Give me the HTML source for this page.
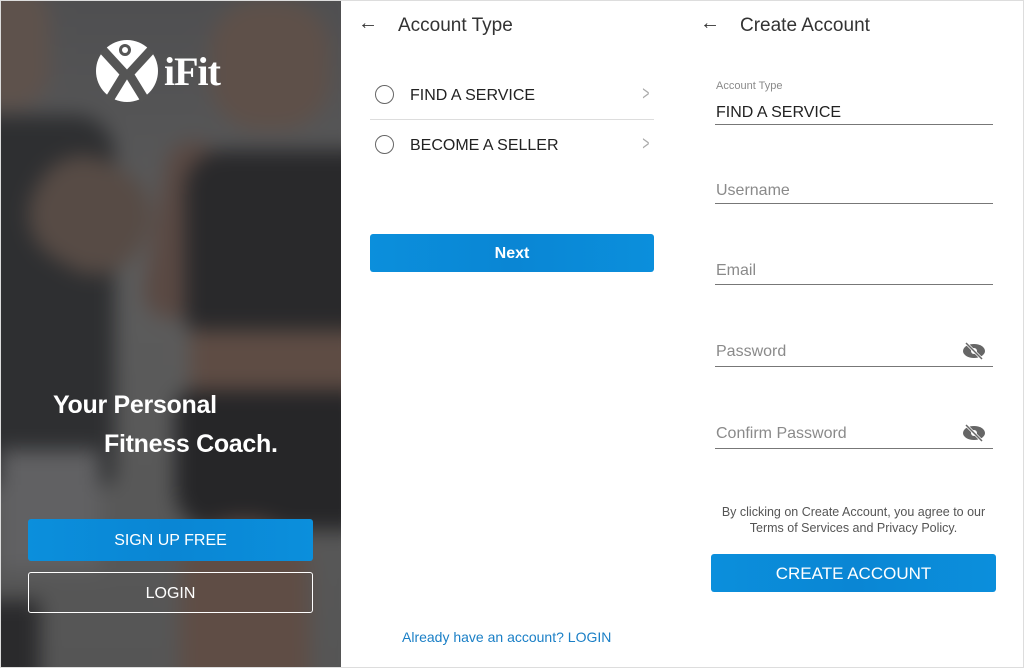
<!DOCTYPE html>
<html><head><meta charset="utf-8"><style>
*{margin:0;padding:0;box-sizing:border-box}
body{width:1024px;height:668px;background:#fff;font-family:"Liberation Sans",Arial,sans-serif;position:relative;overflow:hidden}
.a{position:absolute}
#left{left:0;top:0;width:341px;height:668px;background:#58585a;overflow:hidden}
#photo{left:-20px;top:-20px;width:381px;height:708px;filter:blur(10px)}
#photo div{position:absolute}
.btn{position:absolute;color:#fff;text-align:center;font-size:16px;border-radius:3px}
.blue{background:linear-gradient(90deg,#0b8fdc,#0a86d4 50%,#0b8fdc)}
.lbl{position:absolute;color:#8a8a8a;font-size:16px}
.line{position:absolute;height:1px;background:#777}
</style></head><body>
<div id="left" class="a">
 <div id="photo" class="a">
 <div style="left:0;top:0;width:381px;height:708px;background:linear-gradient(180deg,#4e4e50,#5c5c5c 40%,#555 100%)"></div>
 <div style="left:0;top:0;width:70px;height:130px;background:#5e524c;border-radius:0 40px 40px 0"></div>
 <div style="left:0;top:135px;width:135px;height:370px;background:#2e2f31;border-radius:0 40px 10px 0"></div>
 <div style="left:50px;top:180px;width:120px;height:110px;background:#574b45;border-radius:50px;transform:rotate(30deg)"></div>
 <div style="left:230px;top:20px;width:120px;height:130px;background:#5e5049;border-radius:50px"></div>
 <div style="left:175px;top:160px;width:55px;height:180px;background:#5a4943;border-radius:30px;transform:rotate(10deg)"></div>
 <div style="left:205px;top:170px;width:180px;height:180px;background:#29292b;border-radius:40px 0 0 10px"></div>
 <div style="left:210px;top:350px;width:171px;height:60px;background:#5e4c44"></div>
 <div style="left:195px;top:410px;width:186px;height:140px;background:#262628;border-radius:20px 0 0 40px"></div>
 <div style="left:200px;top:540px;width:130px;height:168px;background:#5f4d45;border-radius:60px 60px 0 0"></div>
 <div style="left:20px;top:470px;width:100px;height:120px;background:#616163"></div>
 <div style="left:0;top:620px;width:60px;height:88px;background:#2a2a2c"></div>
 </div>
 <svg class="a" style="left:95px;top:38px" width="64" height="66" viewBox="0 0 64 66">
  <circle cx="32" cy="33" r="31" fill="#fff"/>
  <path d="M8 12 L30 36 L14 62 M56 12 L34 36 L50 62" stroke="#555" stroke-width="9" fill="none"/>
  <circle cx="30" cy="12" r="6" fill="#555"/><circle cx="30" cy="12" r="3" fill="#fff"/>
 </svg>
 <div class="a" style="left:164px;top:48px;color:#fff;font:bold 40px 'Liberation Serif',serif;letter-spacing:-1px">iFit</div>
 <div class="a" style="left:53px;top:391px;color:#fff;font-weight:bold;font-size:25px;letter-spacing:-0.3px">Your Personal</div>
 <div class="a" style="left:104px;top:430px;color:#fff;font-weight:bold;font-size:25px;letter-spacing:-0.3px">Fitness Coach.</div>
 <div class="btn blue" style="left:28px;top:519px;width:285px;height:42px;line-height:43px">SIGN UP FREE</div>
 <div class="btn" style="left:28px;top:572px;width:285px;height:41px;line-height:41px;border:1.5px solid #fff">LOGIN</div>
</div>
<div class="a" style="left:0;top:0;width:1024px;height:668px;border:1px solid #ddd;pointer-events:none"></div>

<div class="a" style="left:358px;top:12px;font-size:20px;color:#333">&#8592;</div>
<div class="a" style="left:398px;top:15px;font-size:19px;color:#333">Account Type</div>
<div class="a" style="left:375px;top:85px;width:19px;height:19px;border:1.5px solid #666;border-radius:50%"></div>
<div class="a" style="left:410px;top:87px;font-size:16px;color:#222">FIND A SERVICE</div>
<div class="a" style="left:640px;top:83px;font-size:20px;color:#aaa;transform:scaleX(.6)">&gt;</div>
<div class="a" style="left:370px;top:119px;width:284px;height:1px;background:#ddd"></div>
<div class="a" style="left:375px;top:135px;width:19px;height:19px;border:1.5px solid #666;border-radius:50%"></div>
<div class="a" style="left:410px;top:137px;font-size:16px;color:#222">BECOME A SELLER</div>
<div class="a" style="left:640px;top:133px;font-size:20px;color:#aaa;transform:scaleX(.6)">&gt;</div>
<div class="btn blue" style="left:370px;top:234px;width:284px;height:38px;line-height:39px;font-weight:bold">Next</div>
<div class="a" style="left:402px;top:629px;font-size:14px;color:#1a7fc6">Already have an account? LOGIN</div>

<div class="a" style="left:700px;top:12px;font-size:20px;color:#333">&#8592;</div>
<div class="a" style="left:740px;top:15px;font-size:19px;color:#333">Create Account</div>
<div class="lbl" style="left:716px;top:80px;font-size:11px">Account Type</div>
<div class="a" style="left:716px;top:104px;font-size:16px;color:#222">FIND A SERVICE</div>
<div class="line" style="left:715px;top:124px;width:278px"></div>
<div class="lbl" style="left:716px;top:182px">Username</div>
<div class="line" style="left:715px;top:203px;width:278px"></div>
<div class="lbl" style="left:716px;top:262px">Email</div>
<div class="line" style="left:715px;top:284px;width:278px"></div>
<div class="lbl" style="left:716px;top:343px">Password</div>
<div class="line" style="left:715px;top:366px;width:278px"></div>
<div class="lbl" style="left:716px;top:425px">Confirm Password</div>
<div class="line" style="left:715px;top:448px;width:278px"></div>
<svg class="a" style="left:962px;top:341px" width="24" height="20" viewBox="0 0 24 20"><ellipse cx="12" cy="10" rx="11" ry="7" fill="#666"/><circle cx="12" cy="10" r="3" fill="#fff"/><path d="M4 2 L20 18" stroke="#fff" stroke-width="3"/><path d="M4 2 L20 18" stroke="#666" stroke-width="1.5"/></svg>
<svg class="a" style="left:962px;top:423px" width="24" height="20" viewBox="0 0 24 20"><ellipse cx="12" cy="10" rx="11" ry="7" fill="#666"/><circle cx="12" cy="10" r="3" fill="#fff"/><path d="M4 2 L20 18" stroke="#fff" stroke-width="3"/><path d="M4 2 L20 18" stroke="#666" stroke-width="1.5"/></svg>
<div class="a" style="left:711px;top:504px;width:285px;text-align:center;font-size:12.5px;color:#555;line-height:16px">By clicking on Create Account, you agree to our<br>Terms of Services and Privacy Policy.</div>
<div class="btn blue" style="left:711px;top:554px;width:285px;height:38px;line-height:39px;font-size:17px">CREATE ACCOUNT</div>
</body></html>
